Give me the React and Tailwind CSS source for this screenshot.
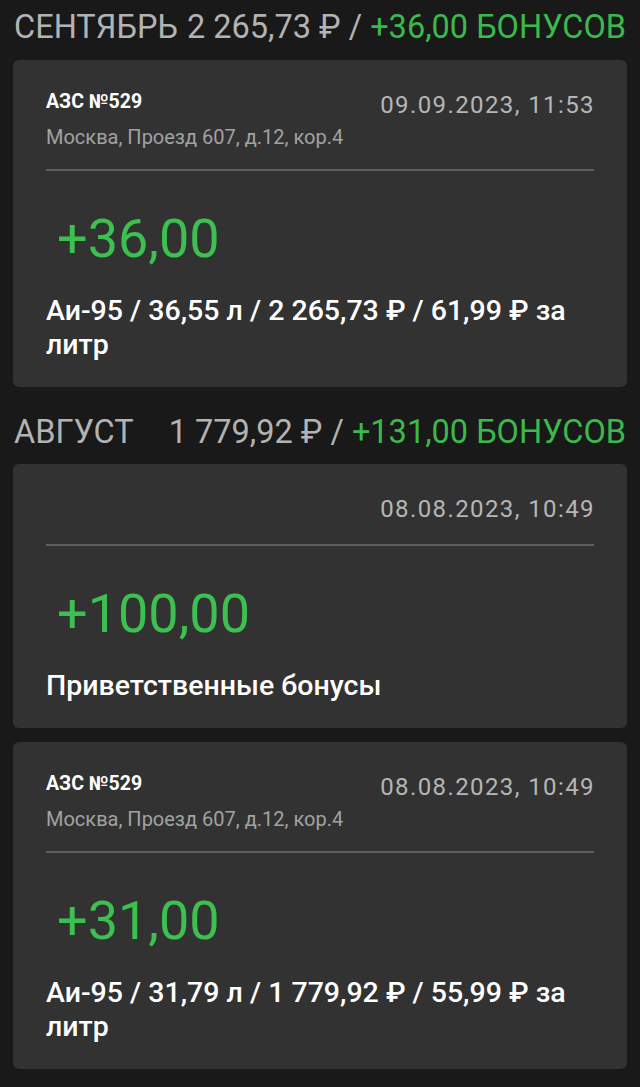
import React from 'react';

const months = [
  {
    month: 'СЕНТЯБРЬ',
    total: '2 265,73 ₽ /',
    bonus: '+36,00 БОНУСОВ',
    first: true,
    items: [
      {
        station: 'АЗС №529',
        address: 'Москва, Проезд 607, д.12, кор.4',
        date: '09.09.2023, 11:53',
        amount: '+36,00',
        details: 'Аи-95 / 36,55 л / 2 265,73 ₽ / 61,99 ₽ за литр',
      },
    ],
  },
  {
    month: 'АВГУСТ',
    total: '1 779,92 ₽ /',
    bonus: '+131,00 БОНУСОВ',
    items: [
      {
        date: '08.08.2023, 10:49',
        amount: '+100,00',
        details: 'Приветственные бонусы',
      },
      {
        station: 'АЗС №529',
        address: 'Москва, Проезд 607, д.12, кор.4',
        date: '08.08.2023, 10:49',
        amount: '+31,00',
        details: 'Аи-95 / 31,79 л / 1 779,92 ₽ / 55,99 ₽ за литр',
      },
    ],
  },
];

function BonusCard({ item }) {
  return (
    <div className="bg-[#323232] rounded-[6px] mx-[13px] px-[33px] pt-[30px] pb-[25px]">
      <div className="flex justify-between items-start">
        <div>
          {item.station && (
            <div className="text-[19.5px] leading-[24px] font-bold text-white">{item.station}</div>
          )}
          {item.address && (
            <div className="text-[20px] leading-[26px] text-[#a2a2a2] mt-[10px]">{item.address}</div>
          )}
        </div>
        <div className="text-[24px] leading-[30px] text-[#b6b6b6] tracking-[1.4px] -mr-[1px]">{item.date}</div>
      </div>
      <div className={`h-[2px] bg-[#5e5e5e] ${item.station ? 'mt-[19px]' : 'mt-[20px]'}`} />
      <div className="text-[54px] leading-[64px] text-[#3cc04f] pl-[11px] mt-[36px]">{item.amount}</div>
      <div className="text-[28.5px] leading-[34px] font-medium text-white mt-[23px]">{item.details}</div>
    </div>
  );
}

export default function App() {
  return (
    <div className="min-h-[1087px] bg-[#191919] pb-[19px]" style={{ fontFamily: 'Roboto, "Noto Sans", sans-serif' }}>
      {months.map((m) => (
        <div key={m.month}>
          <div className={`flex justify-between px-[14px] text-[32.5px] leading-[44px] ${m.first ? 'pt-[5px] pb-[11px]' : 'pt-[23px] pb-[10px]'}`}>
            <span className="text-[#b3b3b3]">{m.month}</span>
            <span>
              <span className="text-[#b3b3b3]">{m.total}</span>{' '}
              <span className="text-[#3bba4c]">{m.bonus}</span>
            </span>
          </div>
          <div className="flex flex-col gap-[14px]">
            {m.items.map((item, i) => (
              <BonusCard key={i} item={item} />
            ))}
          </div>
        </div>
      ))}
    </div>
  );
}
